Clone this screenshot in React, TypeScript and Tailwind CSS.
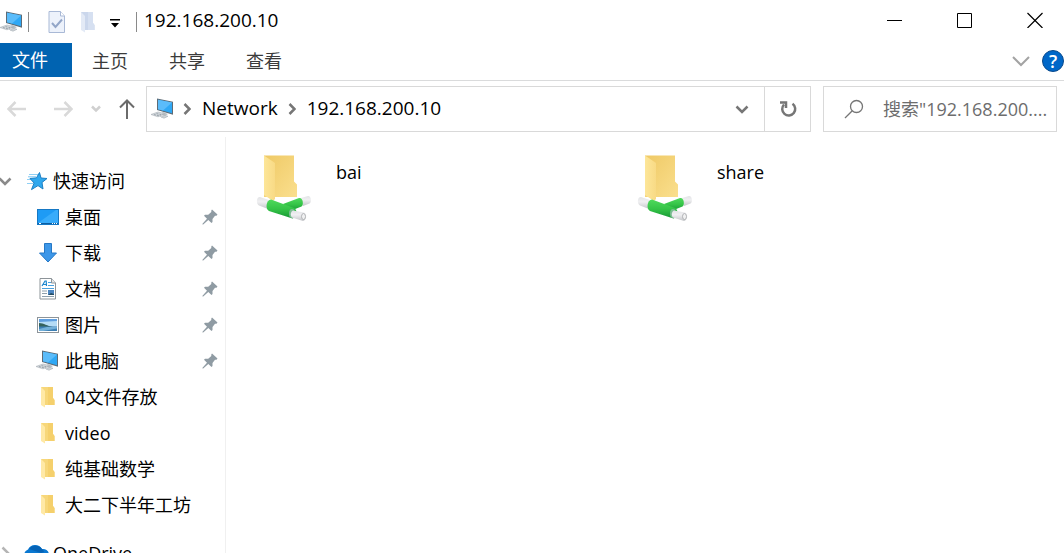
import { useState } from "react";
import type { ReactNode } from "react";

const ComputerIcon = () => (
  <svg width="24" height="22" viewBox="0 0 24 22" aria-hidden="true">
    <path d="M12 14l5 2-3 2-5-2z" fill="#b9c0c5" />
    <path d="M6 .5l16 3.2v13L6 12z" fill="#5d6b76" />
    <path d="M7 1.8l14 2.8v10.6L7 11.2z" fill="#2fa8f5" />
    <path d="M7 1.8l14 2.8-9 8L7 11.2z" fill="#5bbcfa" />
    <path d="M0 16.5l7-2.5 7 1.8-7 3z" fill="#d5dade" stroke="#a7afb5" strokeWidth=".6" />
    <path d="M3 16.6l7 1.6M5.5 15.6l7 1.5" stroke="#8c969e" strokeWidth=".8" strokeDasharray="2 1" />
    <path d="M10 19l4-1.6 3 .9-4 1.9z" fill="#cfd5d9" stroke="#a7afb5" strokeWidth=".6" />
  </svg>
);

const FolderIcon = ({ pale = false }: { pale?: boolean }) => (
  <svg width="16" height="22" viewBox="0 0 16 22" aria-hidden="true">
    <path d="M1 1h12v11l1.5 2v5H1z" fill={pale ? "#cbd7ec" : "#f7d77a"} />
    <path d="M8 1h5v11l1.5 2v5H8z" fill={pale ? "#d6e0f1" : "#f5d06c"} />
    <path d="M1 1l4 4v16.5L1 19z" fill={pale ? "#e3eaf6" : "#ffe9a6"} />
  </svg>
);

const StarIcon = () => (
  <svg width="22" height="20" viewBox="0 0 22 20" aria-hidden="true">
    <path d="M2 3.5h9M0 8.500h6M0 12.500h6" stroke="#8fd0f5" strokeWidth="1" />
    <path d="M12.500 1.500l1.500 5.500 6 .500-5 4 1 6.500-5-3.400-6.500 4 2.600-6.600L3 7.500l6.500-.7z" fill="#2fa8ee" stroke="#1c7fc4" strokeWidth="1" />
    <path d="M1 5.800h8" stroke="#7cc6f2" strokeWidth="1" />
  </svg>
);

const DesktopIcon = () => (
  <svg width="22" height="16" viewBox="0 0 22 16" aria-hidden="true">
    <rect x=".5" y=".5" width="21" height="15" fill="#1e9bf5" stroke="#1678c4" />
    <path d="M1 14L19 1h2v13z" fill="#38acfb" />
    <path d="M1 14.5h20" stroke="#0c5da0" />
    <path d="M2 14.5h2M15 14.5h1M17 14.5h1M19 14.5h1" stroke="#fff" />
  </svg>
);

const DownloadIcon = () => (
  <svg width="20" height="20" viewBox="0 0 20 20" aria-hidden="true">
    <path d="M6.5 .5h7v9.5h5L10 19 1.5 10h5z" fill="#3d97e8" stroke="#2678c6" />
  </svg>
);

const DocumentIcon = () => (
  <svg width="18" height="22" viewBox="0 0 18 22" aria-hidden="true">
    <path d="M1 .5h11.5L16.5 5v16H1z" fill="#fff" stroke="#8d9499" />
    <path d="M12.5 .5V5h4" fill="#e5e8ea" stroke="#8d9499" />
    <path d="M3 8l3-5h1.200L7.500 8M4 6.500h3.500" stroke="#1c86cf" strokeWidth="1.200" fill="none" />
    <path d="M9 4.500h3M9 7.500h6M3 10.500h12" stroke="#4aa0dd" />
    <path d="M3 13h5M3 15.500h5M3 18.500h12" stroke="#8fa0ad" />
    <rect x="9" y="12" width="6" height="5" fill="#4c86c2" />
    <path d="M9 17l3-2 3 1v1z" fill="#264d63" />
  </svg>
);

const PictureIcon = () => (
  <svg width="22" height="16" viewBox="0 0 22 16" aria-hidden="true">
    <rect x=".5" y=".5" width="21" height="15" fill="#fff" stroke="#8d9499" />
    <path d="M2 2h18v12H2z" fill="#b5dcf6" />
    <path d="M2 2h18v2L2 5z" fill="#5f9fe0" />
    <path d="M2 6c5 0 8 3 14 4H2z" fill="#35625c" />
    <path d="M2 9.5h18V14H2z" fill="#3c7fb4" />
    <path d="M2 12l8-2h10v1.5L6 14H2z" fill="#73b0d9" />
  </svg>
);

const PinIcon = () => (
  <svg width="16" height="16" viewBox="0 0 16 16" aria-hidden="true">
    <path d="M10 .5L15.500 5.500l-1 1.200h-1.500L10.500 10v3L9.500 14 6.300 11 1.200 15.500H.5v-.8L5 9.800 2 6.800 3 5.800h3.200L9.300 3V1.500z" fill="#8f9ba3" />
  </svg>
);

const CloudIcon = () => (
  <svg width="26" height="18" viewBox="0 0 26 18" aria-hidden="true">
    <path d="M6 17a6 6 0 0 1-1-11.5A8 8 0 0 1 19 5a6 6 0 0 1 2 12z" fill="#0a78d1" />
    <path d="M6 5A8 8 0 0 1 19 5c1 1 2 2 2 3l-3 1z" fill="#0563b6" />
  </svg>
);

const SharedFolderIcon = () => (
  <svg width="56" height="68" viewBox="0 0 56 68" className="shrink-0" aria-hidden="true">
    <defs>
      <linearGradient id="folderBack" x1="0" y1="0" x2="1" y2="1">
        <stop offset="0" stopColor="#efc965" />
        <stop offset="1" stopColor="#fadf8e" />
      </linearGradient>
      <linearGradient id="folderFlap" x1="0" y1="0" x2="1" y2="0">
        <stop offset="0" stopColor="#fde699" />
        <stop offset="1" stopColor="#f8da85" />
      </linearGradient>
      <linearGradient id="pipe" x1="0" y1="0" x2="0" y2="1">
        <stop offset="0" stopColor="#4fd95c" />
        <stop offset=".5" stopColor="#35c447" />
        <stop offset="1" stopColor="#159634" />
      </linearGradient>
      <linearGradient id="plug" x1="0" y1="0" x2="0" y2="1">
        <stop offset="0" stopColor="#e2e3e6" />
        <stop offset=".4" stopColor="#f0f0f2" />
        <stop offset="1" stopColor="#c4c6c9" />
      </linearGradient>
    </defs>
    <path d="M8 .5h30v26l3 3V42H8z" fill="url(#folderBack)" />
    <path d="M8 .5L19 8v36l-2 2-9-6z" fill="url(#folderFlap)" />
    <path d="M45 43l7-2c3-.500 4 6 1.500 7.500L47 51z" fill="url(#plug)" />
    <path d="M27 49l16-6c4-1 5 7 2.500 8.500L34 56z" fill="url(#pipe)" />
    <path d="M13 45L4 42c-4 0-4 7-1 8.500L12 54z" fill="url(#plug)" />
    <path d="M15 44.500L38 53c4 2 3 9.500-1.500 10.500L13 56c-4-2-3-11 2-11.500z" fill="url(#pipe)" />
    <ellipse cx="36" cy="58.500" rx="3" ry="4.500" fill="#7cbd93" />
    <path d="M37 55.500l11 2c3.500 1 2.500 8-1 8.500L36 62.500c-2-2-1.500-6 1-7z" fill="url(#plug)" />
    <ellipse cx="47.500" cy="61.500" rx="2" ry="3" fill="#f1f1f2" stroke="#a5a7aa" strokeWidth=".8" />
  </svg>
);

const Chevron = ({ className = "" }: { className?: string }) => (
  <svg width="14" height="14" viewBox="0 0 14 14" fill="none" stroke="currentColor" strokeWidth="2.5" className={className} aria-hidden="true">
    <path d="M1.500 4.500L7 10l5.500-5.500" />
  </svg>
);

const CrumbArrow = () => (
  <svg width="8" height="12" viewBox="0 0 8 12" fill="none" stroke="#767676" strokeWidth="2.5" aria-hidden="true">
    <path d="M1.500 1L6.500 6l-5 5" />
  </svg>
);

const Divider = () => <div className="h-5 w-px bg-[#8a8a8a]" />;

const TitleBar = () => (
  <header className="flex h-[43px] shrink-0 items-start">
    <div className="flex h-[43px] items-center">
      <ComputerIcon />
      <div className="ml-1"><Divider /></div>
      <button aria-label="属性" className="ml-[19px]">
        <svg width="18" height="22" viewBox="0 0 18 22" aria-hidden="true">
          <path d="M1 .5h11.500L16.500 5v16.500H1z" fill="#edf2fb" stroke="#a9b9d6" />
          <path d="M12.500 .5V5h4" fill="#fff" stroke="#a9b9d6" />
          <path d="M4 12l3.500 4L14 8.500" fill="none" stroke="#93a6c8" strokeWidth="2" />
        </svg>
      </button>
      <button aria-label="新建文件夹" className="ml-[14px]">
        <FolderIcon pale />
      </button>
      <button aria-label="自定义快速访问工具栏" className="ml-[14px] pt-1">
        <svg width="10" height="9" viewBox="0 0 10 9" aria-hidden="true">
          <path d="M0 0h10v1.500H0zM1 4h8L5 8.500z" fill="#000" />
        </svg>
      </button>
      <div className="ml-4"><Divider /></div>
    </div>
    <h1 className="ml-[7px] text-[19px] leading-10">192.168.200.10</h1>
    <div className="ml-auto -mr-[6px] flex h-10 items-center">
      <button aria-label="最小化" className="flex w-[70px] justify-center">
        <svg width="16" height="16" viewBox="0 0 16 16" stroke="#000" aria-hidden="true"><path d="M0 8.500h15" /></svg>
      </button>
      <button aria-label="最大化" className="flex w-[70px] justify-center">
        <svg width="16" height="16" viewBox="0 0 16 16" fill="none" stroke="#000" aria-hidden="true"><path d="M.5 1.500h14v14H.5z" /></svg>
      </button>
      <button aria-label="关闭" className="flex w-[70px] justify-center">
        <svg width="16" height="16" viewBox="0 0 16 16" stroke="#000" strokeWidth="1.2" aria-hidden="true"><path d="M.5 1l15 15M15.500 1l-15 15" /></svg>
      </button>
    </div>
  </header>
);

const Ribbon = () => (
  <div className="flex h-[38px] shrink-0 items-start border-b border-[#dadbdc] text-lg text-[#3b3b3b]">
    <button className="h-[34px] w-[72px] bg-[#0063b1] pr-3 text-white">文件</button>
    <button className="ml-[2px] h-[34px] w-[72px] pt-px">主页</button>
    <button className="ml-[5px] h-[34px] w-[72px] pt-px">共享</button>
    <button className="ml-[5px] h-[34px] w-[72px] pt-px">查看</button>
    <div className="ml-auto flex h-9 items-center gap-3">
      <button aria-label="展开功能区" className="text-[#a3a3a3]">
        <svg width="18" height="12" viewBox="0 0 18 12" fill="none" stroke="currentColor" strokeWidth="2" aria-hidden="true">
          <path d="M1 2l8 8 8-8" />
        </svg>
      </button>
      <button aria-label="帮助" className="flex size-[22px] items-center justify-center rounded-full border border-[#0a4a8c] bg-[#0067c8] text-lg font-semibold text-white">
        ?
      </button>
    </div>
  </div>
);

const AddressRow = () => {
  const [query, setQuery] = useState("");

  return (
    <div className="flex shrink-0 py-[5px] pr-[7px]">
      <div className="flex w-[146px] items-center pl-[7px]">
        <button aria-label="后退" className="text-[#d9d9d9]">
          <svg width="20" height="16" viewBox="0 0 20 16" fill="none" stroke="currentColor" strokeWidth="2.5" aria-hidden="true"><path d="M8.500 1l-7 7 7 7M1.500 8H19" /></svg>
        </button>
        <button aria-label="前进" className="ml-[26px] text-[#d9d9d9]">
          <svg width="20" height="16" viewBox="0 0 20 16" fill="none" stroke="currentColor" strokeWidth="2.5" aria-hidden="true"><path d="M11.500 1l7 7-7 7M18.500 8H1" /></svg>
        </button>
        <button aria-label="最近浏览的位置" className="ml-[18px] text-[#d0d0d0]">
          <svg width="10" height="8" viewBox="0 0 10 8" fill="none" stroke="currentColor" strokeWidth="2.5" aria-hidden="true"><path d="M1 1.500l4 4 4-4" /></svg>
        </button>
        <button aria-label="向上" className="ml-[18px] text-[#6b6b6b]">
          <svg width="16" height="20" viewBox="0 0 16 20" fill="none" stroke="currentColor" strokeWidth="2" aria-hidden="true"><path d="M1 8.500l7-7 7 7M8 1.500V20" /></svg>
        </button>
      </div>
      <nav aria-label="地址" className="flex h-[46px] flex-1 items-center border border-[#d9d9d9] pl-1 text-[19px]">
        <ComputerIcon />
        <span className="ml-2"><CrumbArrow /></span>
        <a href="#network" className="ml-[11px] pb-[2px]">Network</a>
        <span className="ml-[10px]"><CrumbArrow /></span>
        <a href="#host" className="ml-[11px] pb-[2px]">192.168.200.10</a>
        <button aria-label="以前的位置" className="ml-auto flex w-11 justify-center text-[#767676]">
          <Chevron />
        </button>
        <button aria-label="刷新" className="flex h-full w-[46px] items-center justify-center border-l border-[#d9d9d9]">
          <svg width="18" height="18" viewBox="0 0 18 18" fill="none" stroke="#767676" strokeWidth="2.5" aria-hidden="true">
            <path d="M5 4.500a6.500 6.500 0 1 0 8.500-.8" />
            <path d="M1 2.500h6V8" />
          </svg>
        </button>
      </nav>
      <label className="ml-3 flex h-[46px] w-[234px] items-center border border-[#d9d9d9] pl-5">
        <svg width="20" height="20" viewBox="0 0 20 20" fill="none" stroke="#767676" strokeWidth="1.3" className="shrink-0" aria-hidden="true">
          <circle cx="12.500" cy="7.500" r="6" />
          <path d="M8.300 11.700L1 19" />
        </svg>
        <input
          type="text"
          aria-label="搜索"
          value={query}
          onChange={(e) => setQuery(e.target.value)}
          placeholder={'搜索"192.168.200....'}
          className="ml-[19px] w-full min-w-0 text-lg outline-none placeholder:text-[#6d6d6d]"
        />
      </label>
    </div>
  );
};

const places: { name: string; icon: ReactNode; pinned?: boolean }[] = [
  { name: "桌面", icon: <DesktopIcon />, pinned: true },
  { name: "下载", icon: <DownloadIcon />, pinned: true },
  { name: "文档", icon: <DocumentIcon />, pinned: true },
  { name: "图片", icon: <PictureIcon />, pinned: true },
  { name: "此电脑", icon: <ComputerIcon />, pinned: true },
  { name: "04文件存放", icon: <FolderIcon /> },
  { name: "video", icon: <FolderIcon /> },
  { name: "纯基础数学", icon: <FolderIcon /> },
  { name: "大二下半年工坊", icon: <FolderIcon /> },
];

const Sidebar = () => (
  <aside className="w-[226px] shrink-0 overflow-hidden border-r border-[#f0f0f0] pt-[26px] text-lg">
    <div className="flex h-9 items-center">
      <button aria-label="折叠" className="-ml-[2px] text-[#8a8a8a]"><Chevron /></button>
      <a href="#quick" className="ml-[15px] flex items-center gap-1">
        <StarIcon />
        快速访问
      </a>
    </div>
    <ul>
      {places.map((place) => (
        <li key={place.name}>
          <a href="#place" className="flex h-9 items-center pr-[7px] pl-9">
            <span className="flex w-6 justify-center">{place.icon}</span>
            <span className="ml-[5px]">{place.name}</span>
            {place.pinned && <span className="ml-auto"><PinIcon /></span>}
          </a>
        </li>
      ))}
    </ul>
    <div className="mt-3 flex h-9 items-center">
      <button aria-label="展开" className="-ml-[2px] text-[#b5b5b5]"><Chevron className="-rotate-90" /></button>
      <a href="#onedrive" className="ml-[11px] flex items-center gap-1">
        <CloudIcon />
        OneDrive
      </a>
    </div>
  </aside>
);

const shares = ["bai", "share"];

const App = () => (
  <div className="flex h-screen flex-col overflow-hidden bg-white font-['Open_Sans','Noto_Sans_CJK_SC',sans-serif] text-black">
    <TitleBar />
    <Ribbon />
    <AddressRow />
    <div className="flex min-h-0 flex-1">
      <Sidebar />
      <main className="flex-1 overflow-hidden pt-[18px] pl-[30px]">
        <ul className="grid grid-cols-[repeat(auto-fill,381px)]">
          {shares.map((name) => (
            <li key={name}>
              <a href="#share" className="flex gap-6">
                <SharedFolderIcon />
                <span className="pt-[3px] text-lg">{name}</span>
              </a>
            </li>
          ))}
        </ul>
      </main>
    </div>
  </div>
);

export default App;
